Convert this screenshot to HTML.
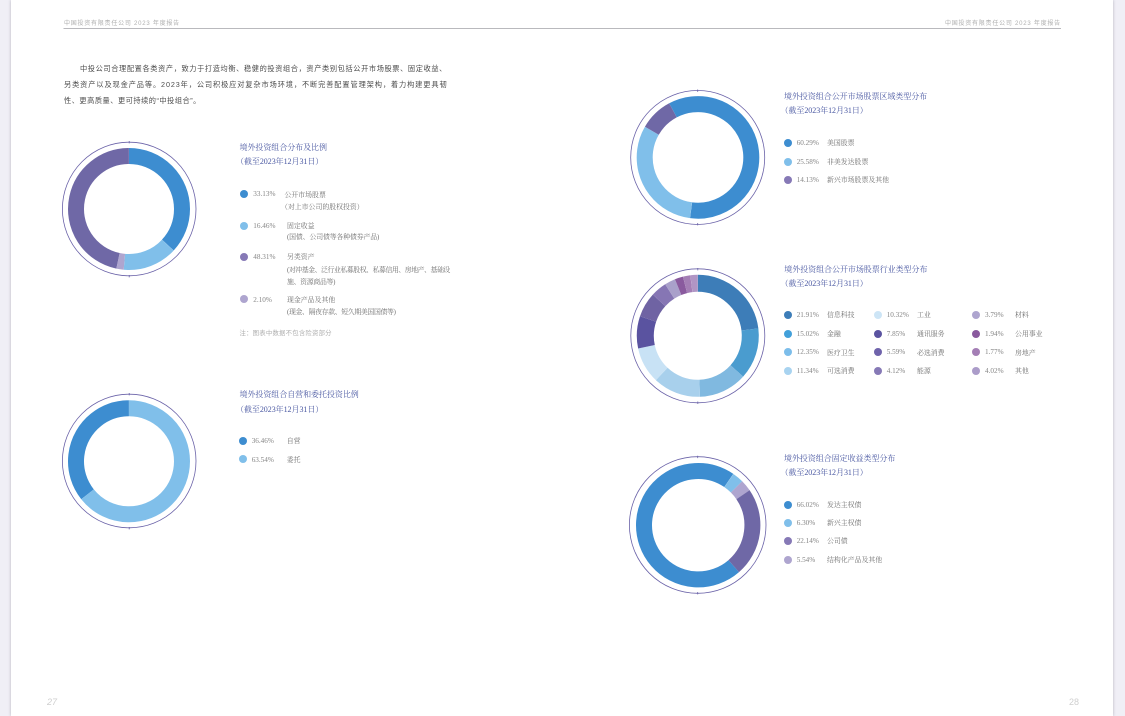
<!DOCTYPE html>
<html><head><meta charset="utf-8">
<style>
html,body{margin:0;padding:0;width:1125px;height:716px;overflow:hidden;background:#f0eff6}
#page{position:absolute;left:11px;top:0;width:1102px;height:716px;background:#fff;box-shadow:0 0 3px #b4b3bd}
#c{position:absolute;left:0;top:0}
.t{position:absolute;white-space:nowrap;height:12px;line-height:12px;margin-top:-5px;font-family:"Liberation Serif","Noto Serif CJK SC",serif;filter:blur(.35px)}
.h{font-family:"Liberation Sans","Noto Sans CJK SC",sans-serif;font-size:6px;letter-spacing:.76px;color:#b0b0b0}
.b{font-family:"Liberation Sans","Noto Sans CJK SC",sans-serif;font-size:7.2px;color:#4c4c4c;margin-top:-5px}
.ti{font-size:8px;color:#4a58a2;letter-spacing:-.05px}
.n{font-size:7.2px;color:#858585;margin-top:-6px}
.l{font-size:6.9px;color:#707070}
.no{font-family:"Liberation Sans","Noto Sans CJK SC",sans-serif;font-size:6.4px;color:#b0b0b0;letter-spacing:.2px}
.p{font-family:"Liberation Sans",sans-serif;font-size:9px;color:#cfcfcf;margin-top:-6px}
.d{position:absolute;width:8px;height:8px;border-radius:50%;margin:-4px 0 0 -4px}
</style></head><body>
<div id="page"></div>
<svg id="c" width="1125" height="716" viewBox="0 0 1125 716" fill="none">
<rect x="63.5" y="28" width="997.5" height="1" fill="#b9b9bd"/>
<g stroke-width="16">
<circle cx="129" cy="209" r="53" pathLength="360" stroke="#3d8dd0" stroke-dasharray="133 360" transform="rotate(-90 129 209)"/>
<circle cx="129" cy="209" r="53" pathLength="360" stroke="#80bfea" stroke-dasharray="52 360" transform="rotate(43 129 209)"/>
<circle cx="129" cy="209" r="53" pathLength="360" stroke="#aea5cf" stroke-dasharray="7 360" transform="rotate(95 129 209)"/>
<circle cx="129" cy="209" r="53" pathLength="360" stroke="#6f68a6" stroke-dasharray="168 360" transform="rotate(102 129 209)"/>

<circle cx="129" cy="461.3" r="53" pathLength="360" stroke="#80bfea" stroke-dasharray="231.5 360" transform="rotate(-90 129 461.3)"/>
<circle cx="129" cy="461.3" r="53" pathLength="360" stroke="#3d8dd0" stroke-dasharray="128.5 360" transform="rotate(141.5 129 461.3)"/>

<circle cx="698" cy="157.4" r="53.3" pathLength="360" stroke="#3d8dd0" stroke-dasharray="215.6 360" transform="rotate(242 698 157.4)"/>
<circle cx="698" cy="157.4" r="53.3" pathLength="360" stroke="#80bfea" stroke-dasharray="112.4 360" transform="rotate(97.6 698 157.4)"/>
<circle cx="698" cy="157.4" r="53.3" pathLength="360" stroke="#6f68a6" stroke-dasharray="32 360" transform="rotate(210 698 157.4)"/>

<g transform="translate(697.8 335.8)">
<circle r="52.5" pathLength="360" stroke="#3d7db8" stroke-width="17" stroke-dasharray="83 360" transform="rotate(-90)"/>
<circle r="52.5" pathLength="360" stroke="#4a9ccf" stroke-width="17" stroke-dasharray="49 360" transform="rotate(-7)"/>
<circle r="52.5" pathLength="360" stroke="#80b9e0" stroke-width="17" stroke-dasharray="46 360" transform="rotate(42)"/>
<circle r="52.5" pathLength="360" stroke="#a8d0ec" stroke-width="17" stroke-dasharray="45.4 360" transform="rotate(88)"/>
<circle r="52.5" pathLength="360" stroke="#c8e2f5" stroke-width="17" stroke-dasharray="34.6 360" transform="rotate(133.4)"/>
<circle r="52.5" pathLength="360" stroke="#5a53a0" stroke-width="17" stroke-dasharray="30.7 360" transform="rotate(168)"/>
<circle r="52.5" pathLength="360" stroke="#6f63a3" stroke-width="17" stroke-dasharray="23.8 360" transform="rotate(198.7)"/>
<circle r="52.5" pathLength="360" stroke="#8676b4" stroke-width="17" stroke-dasharray="15.2 360" transform="rotate(222.5)"/>
<circle r="52.5" pathLength="360" stroke="#a9a0ca" stroke-width="17" stroke-dasharray="10.3 360" transform="rotate(237.7)"/>
<circle r="52.5" pathLength="360" stroke="#8a5a9e" stroke-width="17" stroke-dasharray="8 360" transform="rotate(248)"/>
<circle r="52.5" pathLength="360" stroke="#a47eb5" stroke-width="17" stroke-dasharray="7 360" transform="rotate(256)"/>
<circle r="52.5" pathLength="360" stroke="#b095c4" stroke-width="17" stroke-dasharray="7 360" transform="rotate(263)"/>
</g>

<circle cx="698.2" cy="525.2" r="54.2" pathLength="360" stroke="#3d8dd0" stroke-dasharray="255.5 360" transform="rotate(49 698.2 525.2)"/>
<circle cx="698.2" cy="525.2" r="54.2" pathLength="360" stroke="#80bfea" stroke-dasharray="10.5 360" transform="rotate(-55.5 698.2 525.2)"/>
<circle cx="698.2" cy="525.2" r="54.2" pathLength="360" stroke="#aea5cf" stroke-dasharray="11 360" transform="rotate(-45 698.2 525.2)"/>
<circle cx="698.2" cy="525.2" r="54.2" pathLength="360" stroke="#6f68a6" stroke-dasharray="83.2 360" transform="rotate(-34.2 698.2 525.2)"/>
</g>
<g stroke="#6a62a8" stroke-width=".8">
<circle cx="129.2" cy="209" r="66.8"/>
<circle cx="129.2" cy="461" r="66.8"/>
<circle cx="697.7" cy="157.5" r="67"/>
<circle cx="697.8" cy="335.8" r="67"/>
<circle cx="697.7" cy="525" r="68.3"/>
<path d="M129.2 141v2.4M129.2 275v2.4M129.2 393v2.4M129.2 527v2.4M697.7 89.5v2.4M697.7 223v2.4M697.8 268v2.4M697.8 401.5v2.4M697.7 455.7v2.4M697.7 592v2.4"/>
</g>
</svg>

<div class="t h" style="left:64px;top:22.5px">中国投资有限责任公司 2023 年度报告</div>
<div class="t h" style="left:945px;top:22.5px">中国投资有限责任公司 2023 年度报告</div>

<div class="t b" style="left:80px;top:68px;letter-spacing:.62px">中投公司合理配置各类资产，致力于打造均衡、稳健的投资组合，资产类别包括公开市场股票、固定收益、</div>
<div class="t b" style="left:64px;top:84px;letter-spacing:.9px">另类资产以及现金产品等。2023年，公司积极应对复杂市场环境，不断完善配置管理架构，着力构建更具韧</div>
<div class="t b" style="left:64px;top:100px;letter-spacing:.52px">性、更高质量、更可持续的“中投组合”。</div>

<div class="t ti" style="left:239.5px;top:147.3px">境外投资组合分布及比例</div>
<div class="t ti" style="left:236px;top:161px">（截至2023年12月31日）</div>
<i class="d" style="left:243.7px;top:194px;background:#3d8dd0"></i>
<div class="t n" style="left:253.3px;top:194px">33.13%</div>
<div class="t l" style="left:284.5px;top:194.5px">公开市场股票</div>
<div class="t l" style="left:281px;top:206.5px">（对上市公司的股权投资）</div>
<i class="d" style="left:243.7px;top:225.5px;background:#80bfea"></i>
<div class="t n" style="left:253.3px;top:225.5px">16.46%</div>
<div class="t l" style="left:287px;top:225.7px">固定收益</div>
<div class="t l" style="left:287px;top:237.3px;letter-spacing:-.13px">(国债、公司债等各种债券产品)</div>
<i class="d" style="left:243.7px;top:257px;background:#8679b6"></i>
<div class="t n" style="left:253.3px;top:257px">48.31%</div>
<div class="t l" style="left:287px;top:257.3px">另类资产</div>
<div class="t l" style="left:287px;top:269.5px;letter-spacing:-.45px">(对冲基金、泛行业私募股权、私募信用、房地产、基础设</div>
<div class="t l" style="left:287px;top:281.7px;letter-spacing:-.3px">施、资源商品等)</div>
<i class="d" style="left:243.7px;top:299.3px;background:#aea5cf"></i>
<div class="t n" style="left:253.3px;top:299.5px">2.10%</div>
<div class="t l" style="left:287px;top:299.7px">现金产品及其他</div>
<div class="t l" style="left:287px;top:311.7px;letter-spacing:-.35px">(现金、隔夜存款、短久期美国国债等)</div>
<div class="t no" style="left:239.5px;top:332.7px">注：图表中数据不包含险资部分</div>

<div class="t ti" style="left:239.5px;top:394px">境外投资组合自营和委托投资比例</div>
<div class="t ti" style="left:236px;top:408.5px">（截至2023年12月31日）</div>
<i class="d" style="left:243.3px;top:441px;background:#3d8dd0"></i>
<div class="t n" style="left:251.7px;top:441px">36.46%</div>
<div class="t l" style="left:286.7px;top:441.3px">自营</div>
<i class="d" style="left:243.3px;top:459.3px;background:#80bfea"></i>
<div class="t n" style="left:251.7px;top:460px">63.54%</div>
<div class="t l" style="left:286.7px;top:460.3px">委托</div>

<div class="t ti" style="left:784px;top:95.7px">境外投资组合公开市场股票区域类型分布</div>
<div class="t ti" style="left:780.5px;top:110px">（截至2023年12月31日）</div>
<i class="d" style="left:788.3px;top:142.7px;background:#3d8dd0"></i>
<div class="t n" style="left:796.7px;top:142.7px">60.29%</div>
<div class="t l" style="left:827px;top:142.7px">美国股票</div>
<i class="d" style="left:788.3px;top:161.5px;background:#80bfea"></i>
<div class="t n" style="left:796.7px;top:161.5px">25.58%</div>
<div class="t l" style="left:827px;top:161.7px">非美发达股票</div>
<i class="d" style="left:788.3px;top:179.7px;background:#8679b6"></i>
<div class="t n" style="left:796.7px;top:179.7px">14.13%</div>
<div class="t l" style="left:827px;top:180.3px">新兴市场股票及其他</div>

<div class="t ti" style="left:784.3px;top:269px">境外投资组合公开市场股票行业类型分布</div>
<div class="t ti" style="left:780.5px;top:283.3px">（截至2023年12月31日）</div>

<i class="d" style="left:788.3px;top:315.3px;background:#3d7db8"></i>
<div class="t n" style="left:796.7px;top:315.3px">21.91%</div>
<div class="t l" style="left:827px;top:315.3px">信息科技</div>
<i class="d" style="left:788.3px;top:334px;background:#42a0da"></i>
<div class="t n" style="left:796.7px;top:333.7px">15.02%</div>
<div class="t l" style="left:827px;top:334.3px">金融</div>
<i class="d" style="left:788.3px;top:352.3px;background:#7cbdea"></i>
<div class="t n" style="left:796.7px;top:352px">12.35%</div>
<div class="t l" style="left:827px;top:352.5px">医疗卫生</div>
<i class="d" style="left:788.3px;top:371px;background:#a8d3f0"></i>
<div class="t n" style="left:796.7px;top:370.7px">11.34%</div>
<div class="t l" style="left:827px;top:371.3px">可选消费</div>

<i class="d" style="left:878px;top:315.3px;background:#cde5f6"></i>
<div class="t n" style="left:886.7px;top:315.3px">10.32%</div>
<div class="t l" style="left:917px;top:315.3px">工业</div>
<i class="d" style="left:878px;top:334px;background:#5a53a0"></i>
<div class="t n" style="left:886.7px;top:333.7px">7.85%</div>
<div class="t l" style="left:917px;top:334.3px">通讯服务</div>
<i class="d" style="left:878px;top:352.3px;background:#6f63ab"></i>
<div class="t n" style="left:886.7px;top:352px">5.59%</div>
<div class="t l" style="left:917px;top:352.5px">必选消费</div>
<i class="d" style="left:878px;top:371px;background:#8679b6"></i>
<div class="t n" style="left:886.7px;top:370.7px">4.12%</div>
<div class="t l" style="left:917px;top:371.3px">能源</div>

<i class="d" style="left:976px;top:315.3px;background:#aea5cf"></i>
<div class="t n" style="left:985px;top:315.3px">3.79%</div>
<div class="t l" style="left:1015px;top:315.3px">材料</div>
<i class="d" style="left:976px;top:334px;background:#8a5a9e"></i>
<div class="t n" style="left:985px;top:333.7px">1.94%</div>
<div class="t l" style="left:1015px;top:334.3px">公用事业</div>
<i class="d" style="left:976px;top:352.3px;background:#a47eb5"></i>
<div class="t n" style="left:985px;top:352px">1.77%</div>
<div class="t l" style="left:1015px;top:352.5px">房地产</div>
<i class="d" style="left:976px;top:371px;background:#ab9cc9"></i>
<div class="t n" style="left:985px;top:370.7px">4.02%</div>
<div class="t l" style="left:1015px;top:371.3px">其他</div>

<div class="t ti" style="left:784px;top:457.7px">境外投资组合固定收益类型分布</div>
<div class="t ti" style="left:780.5px;top:472.3px">（截至2023年12月31日）</div>
<i class="d" style="left:788.3px;top:504.5px;background:#3d8dd0"></i>
<div class="t n" style="left:796.7px;top:504.5px">66.02%</div>
<div class="t l" style="left:827px;top:504.5px">发达主权债</div>
<i class="d" style="left:788.3px;top:522.5px;background:#80bfea"></i>
<div class="t n" style="left:796.7px;top:522.5px">6.30%</div>
<div class="t l" style="left:827px;top:523px">新兴主权债</div>
<i class="d" style="left:788.3px;top:540.5px;background:#8679b6"></i>
<div class="t n" style="left:796.7px;top:541.3px">22.14%</div>
<div class="t l" style="left:827px;top:541.3px">公司债</div>
<i class="d" style="left:788.3px;top:560px;background:#aea5cf"></i>
<div class="t n" style="left:796.7px;top:559.5px">5.54%</div>
<div class="t l" style="left:827px;top:560.3px">结构化产品及其他</div>

<div class="t p" style="left:47px;top:702px;font-style:italic">27</div>
<div class="t p" style="left:1069px;top:702px">28</div>
</body></html>
